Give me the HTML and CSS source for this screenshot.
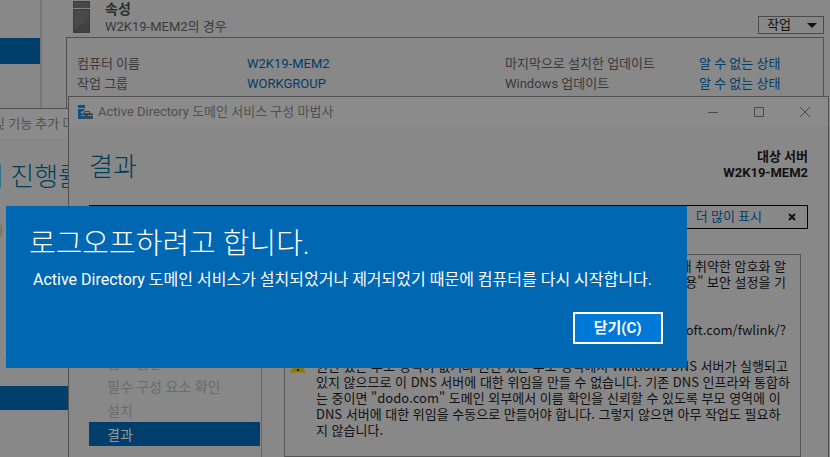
FILE: index.html
```html
<!DOCTYPE html>
<html lang="ko">
<head>
  <meta charset="UTF-8" />
  <meta name="viewport" content="width=device-width, initial-scale=1.0" />
  <title>Active Directory 도메인 서비스 구성 마법사</title>
  <link rel="stylesheet" href="styles.css">
</head>
<body>
  <!-- Server manager -->
  <div class="manager">
    <div class="sidebar">
      <div class="sidebar-selected"></div>
    </div>
    <div class="content">
      <div class="content-header">
        <svg class="server-icon" width="17" height="32" viewBox="0 0 17 32">
          <rect width="17" height="32" fill="#3b3b3b" />
          <rect x="1" y="1" width="15" height="6" fill="#484848" />
          <rect y="7" width="17" height="1" fill="#858585" />
          <path d="M1 9h15v10L1 30z" fill="#494949" />
          <path d="M16 18v13H1z" fill="#414141" />
        </svg>
        <div class="content-title">
          <h2>속성</h2>
          <p>W2K19-MEM2의 경우</p>
        </div>
        <div class="tasks">
          <select aria-label="작업">
            <option>작업</option>
          </select>
          <svg width="10" height="5" viewBox="0 0 10 5"><path d="M0 0h10L5 5z" fill="#111" /></svg>
        </div>
      </div>
      <div class="properties">
        <span>컴퓨터 이름</span>
        <a href="#">W2K19-MEM2</a>
        <span>마지막으로 설치한 업데이트</span>
        <a href="#">알 수 없는 상태</a>
        <span>작업 그룹</span>
        <a href="#">WORKGROUP</a>
        <span>Windows 업데이트</span>
        <a href="#">알 수 없는 상태</a>
      </div>
    </div>
  </div>

  <!-- Roles and features window -->
  <div class="window roles">
    <div class="roles-title">및 기능 추가 마</div>
    <h1>치 진행률</h1>
    <ul>
      <li>하</li>
      <li class="space"></li>
      <li>O</li>
      <li class="selected"></li>
    </ul>
  </div>

  <!-- AD DS configuration wizard -->
  <div class="window wizard">
    <div class="titlebar">
      <svg width="15" height="14" viewBox="0 0 15 14">
        <path d="M0 0h7v3H0zM0 4h7v1L3 7v7H0z" fill="#0c5287" />
        <path d="M6.500 8V6.500h5V8" fill="none" stroke="#35485a" />
        <path d="M4 8h10l1 1v5H3V9z" fill="#35485a" />
        <path d="M3 10.500h4M10 10.500h5" stroke="#6f7a84" />
      </svg>
      <span class="titlebar-text">Active Directory 도메인 서비스 구성 마법사</span>
      <button aria-label="최소화"><svg width="10" height="10" viewBox="0 0 10 10"><path d="M0 5.500h10" /></svg></button>
      <button aria-label="최대화"><svg width="10" height="10" viewBox="0 0 10 10"><path d="M.5.5h9v9h-9z" /></svg></button>
      <button aria-label="닫기"><svg width="10" height="10" viewBox="0 0 10 10"><path d="M0 0l10 10M10 0L0 10" /></svg></button>
    </div>
    <div class="wizard-header">
      <h1>결과</h1>
      <div class="target">대상 서버<br>W2K19-MEM2</div>
    </div>
    <div class="notice">
      <a href="#">더 많이 표시</a>
      <button aria-label="알림 닫기"><svg width="8" height="8" viewBox="0 0 8 8"><path d="M1 1l6 6M7 1L1 7" /></svg></button>
    </div>
    <div class="wizard-body">
      <ul class="steps">
        <li>검토 옵션</li>
        <li>필수 구성 요소 확인</li>
        <li>설치</li>
        <li class="selected">결과</li>
      </ul>
      <div class="results">
        <div class="message message-end">
          <p>때 취약한 암호화 알<br>용" 보안 설정을 기</p>
          <p>microsoft.com/fwlink/?</p>
        </div>
        <div class="message">
          <svg width="16" height="15" viewBox="0 0 16 15">
            <path d="M8 0l8 14.500H0z" fill="#917500" />
            <path d="M7 5h2v5H7zM7 11h2v2H7z" fill="#111" />
          </svg>
          <p>권한 있는 부모 영역이 없거나 권한 있는 부모 영역에서 Windows DNS 서버가 실행되고<br>있지 않으므로 이 DNS 서버에 대한 위임을 만들 수 없습니다. 기존 DNS 인프라와 통합하<br>는 중이면 "dodo.com" 도메인 외부에서 이름 확인을 신뢰할 수 있도록 부모 영역에 이<br>DNS 서버에 대한 위임을 수동으로 만들어야 합니다. 그렇지 않으면 아무 작업도 필요하<br>지 않습니다.</p>
        </div>
      </div>
    </div>
  </div>

  <!-- Sign-out dialog -->
  <div class="dialog" role="dialog" aria-labelledby="dialog-title">
    <h1 id="dialog-title">로그오프하려고 합니다.</h1>
    <p>Active Directory 도메인 서비스가 설치되었거나 제거되었기 때문에 컴퓨터를 다시 시작합니다.</p>
    <button>닫기(C)</button>
  </div>
</body>
</html>
```
FILE: styles.css
```css
* {
  box-sizing: border-box;
}
body {
  margin: 0;
  height: 100vh;
  overflow: hidden;
  position: relative;
  font-family: Roboto, "Noto Sans CJK KR", sans-serif;
  font-size: 13px;
  line-height: 20px;
  color: #3a3a3a;
  background: #888;
}
h1, h2, p, ul {
  margin: 0;
  padding: 0;
}
ul {
  list-style: none;
}
a {
  color: #003d6b;
  text-decoration: none;
}
button, select {
  font: inherit;
  color: inherit;
  border: none;
  background: none;
  padding: 0;
}

/* server manager */
.manager {
  display: flex;
  height: 100%;
}
.sidebar {
  width: 42px;
  padding-top: 38px;
  border-right: 2px solid #777;
}
.sidebar-selected {
  height: 26px;
  background: #003f6c;
}
.content {
  flex: 1;
  display: flex;
  flex-direction: column;
  padding: 0 6px 0 24px;
}
.content-header {
  display: flex;
  height: 37px;
  padding-left: 7px;
}
.server-icon {
  margin-top: 1px;
}
.content-title {
  flex: 1;
  padding-left: 15px;
  line-height: 18px;
}
.content-title h2 {
  font-size: 14px;
  line-height: 18px;
  color: #2e2e2e;
}
.tasks {
  position: relative;
  margin-top: 16px;
}
.tasks select {
  appearance: none;
  display: block;
  width: 66px;
  height: 18px;
  padding-left: 8px;
  border: 1px solid #4a4a4a;
  color: #111;
  line-height: 16px;
}
.tasks svg {
  position: absolute;
  top: 7px;
  right: 7px;
}
.properties {
  flex: 1;
  display: grid;
  grid-template-columns: 170px 1fr 194px 124px;
  grid-auto-rows: 20px;
  align-content: start;
  padding: 16px 0 0 10px;
  border: 1px solid #505050;
}

/* windows */
.window {
  position: absolute;
  bottom: 0;
  overflow: hidden;
  background: #888;
  border: 1px solid #505050;
  border-bottom: none;
}
.window h1 {
  font-size: 26px;
  font-weight: 300;
  line-height: 36px;
  color: #003f5a;
}
.roles {
  top: 108px;
  left: -9px;
  width: 90px;
  white-space: nowrap;
}
.roles-title {
  height: 30px;
  line-height: 30px;
  padding-left: 1px;
  color: #505050;
  background: #8b8b8b;
}
.roles h1 {
  padding: 20px 0 24px;
  margin-left: -12px;
}
.roles li {
  height: 24px;
  line-height: 24px;
  color: #6b6b6b;
}
.roles .space {
  height: 98px;
}
.roles .selected, .steps .selected {
  color: #999;
  background: #003f6c;
}
.roles .selected {
  margin-top: 21px;
}
.wizard {
  top: 96px;
  left: 68px;
  right: 1px;
  display: flex;
  flex-direction: column;
}
.titlebar {
  display: flex;
  align-items: center;
  height: 29px;
  padding-left: 9px;
  color: #505050;
  background: #8b8b8b;
}
.titlebar-text {
  flex: 1;
  padding-left: 5px;
}
.titlebar button {
  width: 46px;
  height: 28px;
  line-height: 0;
}
.titlebar button path {
  fill: none;
  stroke: #4a4a4a;
}
.wizard-header {
  display: flex;
  justify-content: space-between;
  height: 79px;
  padding: 23px 20px 0;
}
.target {
  font-weight: bold;
  line-height: 16px;
  text-align: right;
  color: #111;
}
.notice {
  display: flex;
  align-items: center;
  justify-content: flex-end;
  gap: 26px;
  height: 24px;
  margin: 0 20px;
  padding-right: 11px;
  border: 1px solid #000;
}
.notice button {
  line-height: 0;
}
.notice path {
  stroke: #111;
  stroke-width: 2;
}
.wizard-body {
  flex: 1;
  min-height: 0;
  display: flex;
  gap: 22px;
  padding: 25px 27px 0 20px;
}
.steps {
  width: 173px;
  padding: 96px 1px 0 0;
  border-right: 1px solid #666;
}
.steps li {
  height: 24px;
  line-height: 26px;
  padding-left: 18px;
  font-size: 14px;
  color: #6b6b6b;
}
.results {
  flex: 1;
  min-width: 0;
  padding: 3px 0 0 5px;
  border: 1px solid #555;
  font-family: "Noto Sans CJK KR", sans-serif;
  line-height: 16px;
  color: #111;
  white-space: nowrap;
}
.message {
  display: flex;
  gap: 10px;
}
.message svg {
  flex: none;
}
.message-end {
  flex-direction: column;
  gap: 32px;
  height: 100px;
  padding-right: 14px;
  text-align: right;
}

/* dialog */
.dialog {
  position: absolute;
  top: 206px;
  left: 6px;
  width: 82%;
  display: flex;
  flex-direction: column;
  padding: 18px 24px 24px 23px;
  color: #fff;
  background: #0067b3;
}
.dialog h1 {
  font-size: 29px;
  font-weight: 300;
  line-height: 40px;
}
.dialog p {
  padding: 4px 0 0 4px;
  font-size: 16px;
  line-height: 24px;
}
.dialog button {
  align-self: flex-end;
  width: 90px;
  height: 32px;
  margin-top: 20px;
  border: 2px solid #fff;
  font-size: 15px;
  font-weight: bold;
  line-height: 24px;
  background: #0078d7;
}
```
